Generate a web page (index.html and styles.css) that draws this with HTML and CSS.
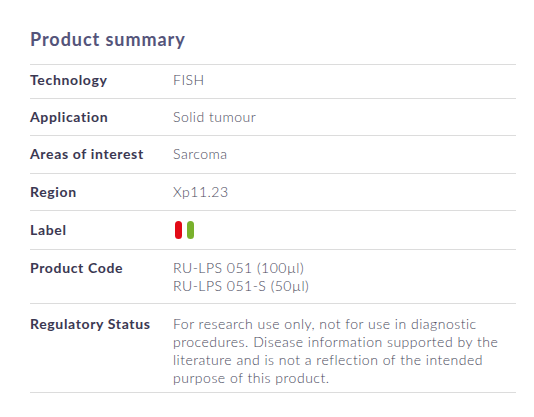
FILE: index.html
```html
<!DOCTYPE html>
<html lang="en">
<head>
<meta charset="utf-8">
<title>Product summary</title>
<link rel="stylesheet" href="styles.css">
</head>
<body>
<section class="summary">
  <h2 class="summary__title">Product summary</h2>
  <dl class="summary__list">
    <div class="row row--first">
      <dt class="row__label">Technology</dt>
      <dd class="row__value">FISH</dd>
    </div>
    <div class="row">
      <dt class="row__label">Application</dt>
      <dd class="row__value">Solid tumour</dd>
    </div>
    <div class="row row--tall">
      <dt class="row__label">Areas of interest</dt>
      <dd class="row__value">Sarcoma</dd>
    </div>
    <div class="row">
      <dt class="row__label">Region</dt>
      <dd class="row__value">Xp11.23</dd>
    </div>
    <div class="row row--label">
      <dt class="row__label">Label</dt>
      <dd class="row__value pills">
        <span class="pill pill--red"></span>
        <span class="pill pill--green"></span>
      </dd>
    </div>
    <div class="row">
      <dt class="row__label">Product Code</dt>
      <dd class="row__value row__value--multi">RU-LPS 051 (100µl)<br>RU-LPS 051-S (50µl)</dd>
    </div>
    <div class="row row--status">
      <dt class="row__label">Regulatory Status</dt>
      <dd class="row__value row__value--para">For research use only, not for use in diagnostic procedures. Disease information supported by the literature and is not a reflection of the intended purpose of this product.</dd>
    </div>
  </dl>
</section>
</body>
</html>
```

FILE: styles.css
```css
html, body {
  margin: 0;
  padding: 0;
  background: #ffffff;
}

body {
  font-family: "Lato", "Open Sans", "Liberation Sans", sans-serif;
}

.summary {
  width: 486px;
  padding: 27px 0 0 30px;
}

.summary__title {
  margin: 0;
  padding: 0 0 13px 0;
  font-size: 18px;
  line-height: 24px;
  font-weight: 700;
  letter-spacing: 0.95px;
  color: #54547a;
  border-bottom: 1px solid #dcdcdc;
}

.summary__list {
  margin: 0;
  padding: 0;
}

.row {
  display: grid;
  grid-template-columns: 143px 1fr;
  padding: 9px 0 9px 0;
  border-bottom: 1px solid #dcdcdc;
  font-size: 14px;
  line-height: 18px;
}

.row--first {
  padding: 6px 0 9px 0;
}

.row--tall {
  padding: 9px 0 10px 0;
}

.row--label {
  padding: 10px 0 10px 0;
}

.row--status {
  padding: 11px 0 5px 0;
}

.row__label {
  margin: 0;
  font-weight: 700;
  letter-spacing: 0.65px;
  color: #3b3852;
}

.row__value {
  margin: 0;
  font-weight: 300;
  letter-spacing: 0.5px;
  color: #4a4a5c;
}

.row__value--multi {
  line-height: 17.5px;
}

.row__value--para {
  line-height: 18px;
}

.pills {
  display: flex;
  gap: 5px;
  padding-left: 2px;
  align-items: center;
}

.pill {
  display: block;
  width: 7px;
  height: 18px;
  border-radius: 4px;
}

.pill--red {
  background: #e20a16;
}

.pill--green {
  background: #79b12c;
}
```
